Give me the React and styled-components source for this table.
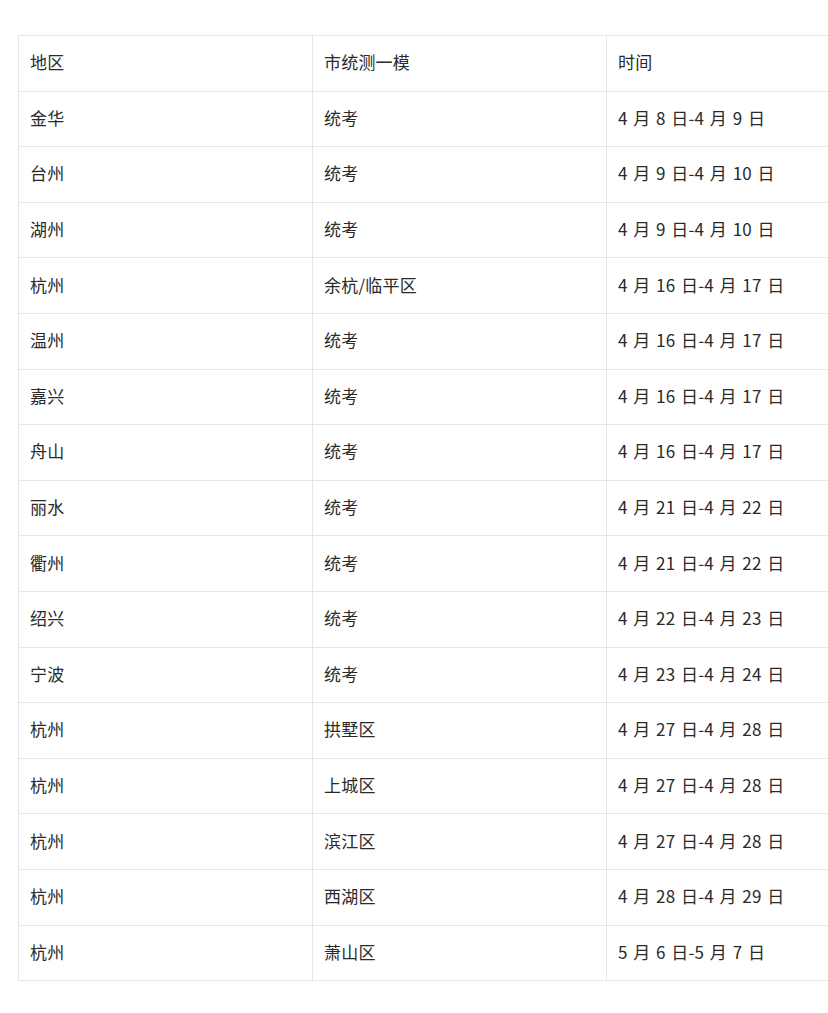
import React from "react";
import styled, { createGlobalStyle } from "styled-components";

const Global = createGlobalStyle`
  html, body { margin: 0; padding: 0; background: #fff; overflow: hidden; }
  body { font-family: "Noto Sans CJK SC", "Noto Sans", sans-serif; }
`;

const Page = styled.div`
  width: 828px;
  height: 1013px;
  overflow: hidden;
  padding: 35px 0 0 18px;
  box-sizing: border-box;
`;

const Table = styled.table`
  border-collapse: collapse;
  table-layout: fixed;
  width: 882px;
  border: 1px solid #e6e6e6;
`;

const Row = styled.tr`
  height: 55.6px;
`;

const Cell = styled.td`
  box-sizing: border-box;
  width: 294px;
  border: 1px solid #e6e6e6;
  padding: 0 0 3px 11px;
  font-size: 17px;
  color: #2a2a2a;
  vertical-align: middle;
  white-space: nowrap;
  letter-spacing: 0.2px;
  word-spacing: ${(p) => (p.$date ? "1.6px" : "0")};
  font-variant-numeric: proportional-nums;
  line-height: 1;
`;

const rows = [
  ["金华", "统考", "4 月 8 日-4 月 9 日"],
  ["台州", "统考", "4 月 9 日-4 月 10 日"],
  ["湖州", "统考", "4 月 9 日-4 月 10 日"],
  ["杭州", "余杭/临平区", "4 月 16 日-4 月 17 日"],
  ["温州", "统考", "4 月 16 日-4 月 17 日"],
  ["嘉兴", "统考", "4 月 16 日-4 月 17 日"],
  ["舟山", "统考", "4 月 16 日-4 月 17 日"],
  ["丽水", "统考", "4 月 21 日-4 月 22 日"],
  ["衢州", "统考", "4 月 21 日-4 月 22 日"],
  ["绍兴", "统考", "4 月 22 日-4 月 23 日"],
  ["宁波", "统考", "4 月 23 日-4 月 24 日"],
  ["杭州", "拱墅区", "4 月 27 日-4 月 28 日"],
  ["杭州", "上城区", "4 月 27 日-4 月 28 日"],
  ["杭州", "滨江区", "4 月 27 日-4 月 28 日"],
  ["杭州", "西湖区", "4 月 28 日-4 月 29 日"],
  ["杭州", "萧山区", "5 月 6 日-5 月 7 日"],
];

export default function App() {
  return (
    <>
      <Global />
      <Page>
        <Table>
          <tbody>
            <Row>
              <Cell>地区</Cell>
              <Cell>市统测一模</Cell>
              <Cell>时间</Cell>
            </Row>
            {rows.map((r, i) => (
              <Row key={i}>
                <Cell>{r[0]}</Cell>
                <Cell>{r[1]}</Cell>
                <Cell $date>{r[2]}</Cell>
              </Row>
            ))}
          </tbody>
        </Table>
      </Page>
    </>
  );
}
